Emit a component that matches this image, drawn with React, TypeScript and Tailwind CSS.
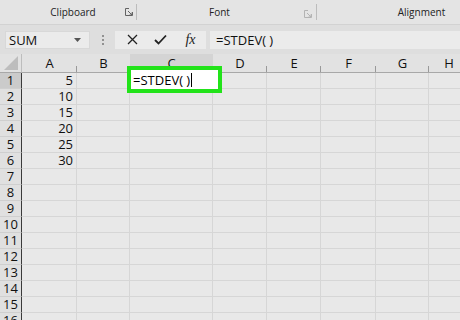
import React from "react";

const cols = ["A", "B", "C", "D", "E", "F", "G", "H"];
const values: Record<number, string> = { 1: "5", 2: "10", 3: "15", 4: "20", 5: "25", 6: "30" };
const rows = Array.from({ length: 16 }, (_, i) => i + 1);

function Launcher({ faded }: { faded?: boolean }) {
  return (
    <svg width="8" height="8" viewBox="0 0 8 8" className={faded ? "opacity-30" : "opacity-80"}>
      <path d="M0.5 0.5H4M0.5 0.5V7.5H7.5V4" stroke="#444" strokeWidth="1" fill="none" />
      <path d="M3 3L7 7M7 4.5V7H4.5" stroke="#444" strokeWidth="1" fill="none" />
    </svg>
  );
}

export default function App() {
  return (
    <div
      className="w-[460px] h-[320px] overflow-hidden bg-[#e7e7e7] flex flex-col text-[#111]"
      style={{ fontFamily: '"Open Sans", "Noto Sans", sans-serif' }}
    >
      {/* Ribbon group labels */}
      <div className="h-[24px] flex bg-[#e4e4e4] text-[10px] text-[#222] shrink-0">
        <div className="w-[137px] flex items-center relative border-r border-[#bcbcbc] h-[16px] mt-[4px]">
          <span className="flex-1 text-center pl-[10px]">Clipboard</span>
          <span className="absolute right-[3px] top-[4px]"><Launcher /></span>
        </div>
        <div className="w-[180px] flex items-center relative border-r border-[#bcbcbc] h-[16px] mt-[4px]">
          <span className="flex-1 text-center pr-[14px]">Font</span>
          <span className="absolute right-[4px] top-[6px]"><Launcher faded /></span>
        </div>
        <div className="flex-1 flex items-center h-[16px] mt-[4px]">
          <span className="flex-1 text-center pl-[66px]">Alignment</span>
        </div>
      </div>

      {/* Formula bar */}
      <div className="h-[30px] flex items-center bg-[#dedede] border-t border-[#d2d2d2] shrink-0 pl-[5px]">
        <div className="w-[85px] h-[18px] bg-[#ebebeb] flex items-center justify-between px-[3px] border border-[#d8d8d8]">
          <span className="text-[13px] leading-[16px]">SUM</span>
          <svg width="7" height="4" viewBox="0 0 7 4" className="mr-[5px]">
            <path d="M0 0H7L3.5 4Z" fill="#555" />
          </svg>
        </div>
        <div className="w-[25px] flex flex-col items-center gap-[2px]">
          <span className="w-[2px] h-[2px] bg-[#777] rounded-full" />
          <span className="w-[2px] h-[2px] bg-[#777] rounded-full" />
          <span className="w-[2px] h-[2px] bg-[#777] rounded-full" />
        </div>
        <div className="w-[91px] h-[18px] bg-[#ebebeb] flex items-center">
          <div className="w-[30px] flex justify-center pl-[4px]">
            <svg width="11" height="11" viewBox="0 0 11 11">
              <path d="M1 1L10 10M10 1L1 10" stroke="#222" strokeWidth="1.3" />
            </svg>
          </div>
          <div className="w-[28px] flex justify-center pl-[2px]">
            <svg width="13" height="11" viewBox="0 0 13 11">
              <path d="M1 6L4.5 9.5L12 1.5" stroke="#222" strokeWidth="1.8" fill="none" />
            </svg>
          </div>
          <div className="flex-1 flex justify-center pl-[2px]">
            <span
              className="italic text-[14px] leading-[16px] text-[#222]"
              style={{ fontFamily: '"Liberation Serif", "DejaVu Serif", serif' }}
            >
              fx
            </span>
          </div>
        </div>
        <div className="flex-1 h-[18px] bg-[#ebebeb] ml-[4px] flex items-center pl-[6px]">
          <span className="text-[13px] leading-[16px]">=STDEV( )</span>
        </div>
      </div>

      {/* Grid */}
      <div className="relative flex-1 overflow-hidden">
        <div className="grid grid-cols-[22px_55px_53px_83px_54px_54px_55px_53px_40px] grid-rows-[19px] auto-rows-[16px]">
          {/* corner */}
          <div className="bg-[#e2e2e2] border-b border-[#a8a8a8] border-r border-r-[#bdbdbd] relative">
            <svg width="14" height="14" viewBox="0 0 14 14" className="absolute right-[3px] bottom-[2px]">
              <path d="M14 0V14H0Z" fill="#bdbdbd" />
            </svg>
          </div>
          {cols.map((c) => (
            <div
              key={c}
              className={`relative flex items-center justify-center text-[13px] leading-[18px] border-b border-[#a8a8a8] ${
                c === "C" ? "bg-[#d4d4d4]" : "bg-[#e2e2e2]"
              }`}
            >
              {c}
              <span className="absolute right-0 bottom-0 w-px h-[6px] bg-[#999]" />
            </div>
          ))}
          {rows.map((r) => (
            <React.Fragment key={r}>
              <div
                className={`flex items-center justify-center text-[13px] leading-[15px] border-b border-[#cfcfcf] border-r border-r-[#3a3a3a] ${
                  r === 1 ? "bg-[#cbcbcb]" : "bg-[#e0e0e0]"
                }`}
              >
                {r}
              </div>
              {cols.map((c) => (
                <div
                  key={c}
                  className="flex items-center justify-end pr-[3px] text-[13px] leading-[15px] bg-[#e8e8e8] border-b border-r border-[#d6d6d6]"
                >
                  {c === "A" ? values[r] ?? "" : ""}
                </div>
              ))}
            </React.Fragment>
          ))}
        </div>

        {/* editing cell overlay */}
        <div className="absolute left-[127px] top-[12px] w-[95px] h-[27px] border-[4px] border-[#22e31a] bg-white flex items-center pl-[2px]">
          <span className="text-[13px] leading-[16px] text-black">=STDEV( )</span>
          <span className="w-px h-[14px] bg-black ml-[1px]" />
        </div>
      </div>
    </div>
  );
}
